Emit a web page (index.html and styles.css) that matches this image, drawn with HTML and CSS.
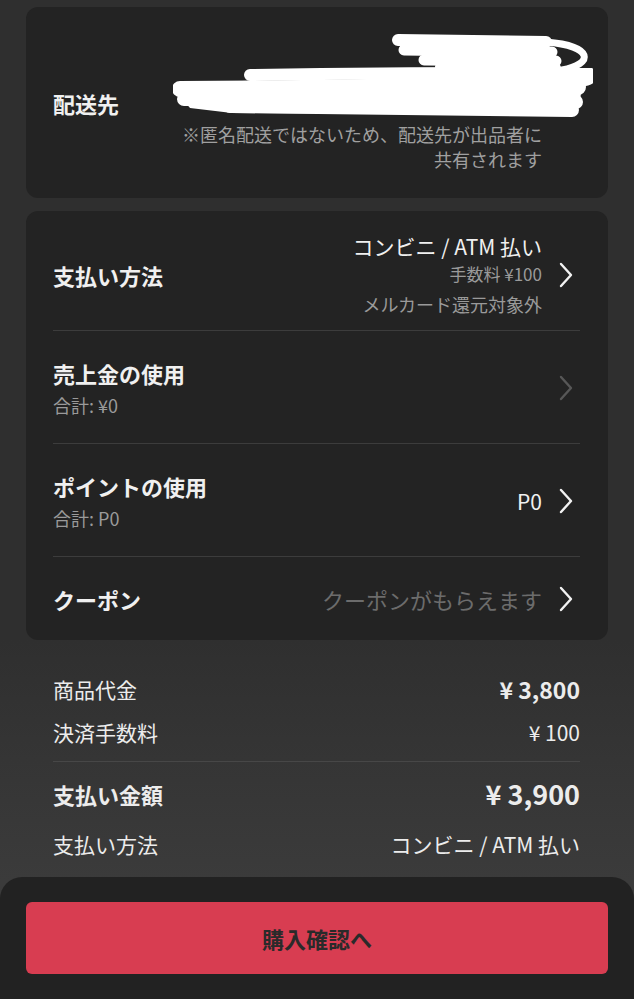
FILE: index.html
```html
<!DOCTYPE html>
<html lang="ja">
<head>
    <meta charset="UTF-8">
    <meta name="viewport" content="width=device-width, initial-scale=1.0">
    <title>購入手続き</title>
    <link rel="stylesheet" href="styles.css">
</head>
<body>
    <div class="page">
        <div class="card address-card">
            <div class="row">
                <div class="row-title">配送先</div>
                <div class="row-value">
                    <div class="address-lines"></div>
                    <p class="note">※匿名配送ではないため、配送先が出品者に<br>共有されます</p>
                </div>
                <svg class="chevron" viewBox="0 0 14 26"><polyline points="2,2 12,13 2,24"/></svg>
            </div>
            <!-- 住所は手書きで塗りつぶされている -->
            <svg class="scribble" viewBox="173 33 420 86">
                <path class="fill" d="M182 82 L430 78 L582 79 L580 104 L572 111 L420 114 L232 113 L190 108 L180 96 Z"/>
                <path d="M398 40 L546 42" stroke-width="12"/>
                <path d="M404 50 L552 52" stroke-width="11"/>
                <path d="M546 42 C594 46 594 64 562 70" stroke-width="7"/>
                <path d="M424 60 L556 61" stroke-width="11"/>
                <path d="M440 67 L556 68" stroke-width="10"/>
                <path d="M250 75 C400 73 500 72 590 74 C598 80 570 84 545 84" stroke-width="12"/>
                <path d="M180 89 L578 87" stroke-width="16"/>
                <path d="M184 99 L576 102" stroke-width="14"/>
                <path d="M230 106 L572 110" stroke-width="14"/>
            </svg>
        </div>

        <div class="card menu-card">
            <div class="row payment">
                <div class="row-title">支払い方法</div>
                <div class="row-value">
                    <div class="value-main">コンビニ / ATM 払い</div>
                    <div class="value-sub">手数料 ¥100</div>
                    <div class="value-note">メルカード還元対象外</div>
                </div>
                <svg class="chevron" viewBox="0 0 14 26"><polyline points="2,2 12,13 2,24"/></svg>
            </div>
            <div class="row">
                <div class="row-title">
                    売上金の使用
                    <div class="row-sub">合計: ¥0</div>
                </div>
                <div class="row-value"></div>
                <svg class="chevron disabled" viewBox="0 0 14 26"><polyline points="2,2 12,13 2,24"/></svg>
            </div>
            <div class="row">
                <div class="row-title">
                    ポイントの使用
                    <div class="row-sub">合計: P0</div>
                </div>
                <div class="row-value">
                    <div class="value-main points">P0</div>
                </div>
                <svg class="chevron" viewBox="0 0 14 26"><polyline points="2,2 12,13 2,24"/></svg>
            </div>
            <div class="row">
                <div class="row-title">クーポン</div>
                <div class="row-value">
                    <div class="value-placeholder">クーポンがもらえます</div>
                </div>
                <svg class="chevron" viewBox="0 0 14 26"><polyline points="2,2 12,13 2,24"/></svg>
            </div>
        </div>

        <div class="summary">
            <div class="summary-row">
                <span>商品代金</span>
                <span class="price">¥ 3,800</span>
            </div>
            <div class="summary-row">
                <span>決済手数料</span>
                <span>¥ 100</span>
            </div>
            <div class="summary-row total">
                <span>支払い金額</span>
                <span class="price">¥ 3,900</span>
            </div>
            <div class="summary-row method">
                <span>支払い方法</span>
                <span>コンビニ / ATM 払い</span>
            </div>
        </div>
    </div>

    <div class="bottom-bar">
        <button class="buy-button">購入確認へ</button>
    </div>
</body>
</html>
```

FILE: styles.css
```css
body {
    margin: 0;
    min-height: 100vh;
    background: linear-gradient(#2f2f2f 0, #2f2f2f 640px, #3b3b3b 880px);
    font-family: 'Noto Sans CJK JP', 'Noto Sans', sans-serif;
    color: #f0f0f0;
}
.page {
    padding: 7px 26px 0;
}
.card {
    background-color: #232323;
    border-radius: 12px;
    padding: 0 28px 0 27px;
}
.row {
    display: flex;
    align-items: center;
    padding: 27px 7px 26px 0;
    border-top: 1px solid #3c3c3c;
}
.row:first-child {
    border-top: none;
}
.row-title {
    font-size: 22px;
    font-weight: 700;
    line-height: 30px;
    white-space: nowrap;
}
.row-sub {
    margin-top: 5px;
    font-size: 18px;
    font-weight: 400;
    line-height: 24px;
    color: #9a9a9a;
}
.row-value {
    flex: 1;
    display: flex;
    flex-direction: column;
    align-items: flex-end;
    text-align: right;
}
.chevron {
    width: 14px;
    height: 26px;
    margin-left: 17px;
    flex-shrink: 0;
}
.chevron polyline {
    fill: none;
    stroke: #f2f2f2;
    stroke-width: 2.4;
    stroke-linecap: round;
    stroke-linejoin: round;
}
.chevron.disabled polyline {
    stroke: #575757;
}

/* 配送先 */
.address-card {
    position: relative;
    margin-bottom: 13px;
}
.address-card .row {
    padding: 26px 7px 26px 0;
}
.address-lines {
    height: 89px;
}
.note {
    margin: 0;
    font-size: 18px;
    line-height: 25px;
    color: #a0a0a0;
}
.scribble {
    position: absolute;
    left: 147px;
    top: 26px;
    width: 420px;
    height: 86px;
}
.scribble path {
    fill: none;
    stroke: #ffffff;
    stroke-linecap: round;
}
.scribble path.fill {
    fill: #ffffff;
    stroke: none;
}

/* 支払い方法など */
.row.payment {
    padding: 21px 7px 13px 0;
}
.value-main {
    font-size: 21px;
    line-height: 28px;
    color: #f0f0f0;
}
.value-sub {
    margin-top: 2px;
    font-size: 17px;
    line-height: 24px;
    color: #9a9a9a;
}
.value-note {
    margin-top: 5px;
    font-size: 18px;
    line-height: 26px;
    color: #9a9a9a;
}
.value-placeholder {
    font-size: 22px;
    line-height: 30px;
    color: #6c6c6c;
}

/* 金額 */
.summary {
    padding: 35px 28px 0 27px;
}
.summary-row {
    display: flex;
    justify-content: space-between;
    align-items: center;
    font-size: 21px;
    line-height: 28px;
    color: #ececec;
    margin-bottom: 15px;
}
.summary-row .price {
    font-size: 23px;
    font-weight: 700;
}
.summary-row.total {
    margin-bottom: 0;
    padding: 17px 0 21px;
    border-top: 1px solid #474747;
    font-size: 22px;
    font-weight: 700;
    line-height: 30px;
}
.summary-row.total .price {
    font-size: 27px;
}
.summary-row.method {
    margin-bottom: 0;
}

.bottom-bar {
    margin-top: 19px;
    background-color: #222222;
    border-radius: 22px 22px 0 0;
    padding: 25px 26px 26px;
}
.buy-button {
    display: block;
    width: 100%;
    height: 72px;
    border: none;
    border-radius: 6px;
    background-color: #d83d51;
    color: #2a2a2a;
    font-family: inherit;
    font-size: 22px;
    font-weight: 700;
    cursor: pointer;
}
```
